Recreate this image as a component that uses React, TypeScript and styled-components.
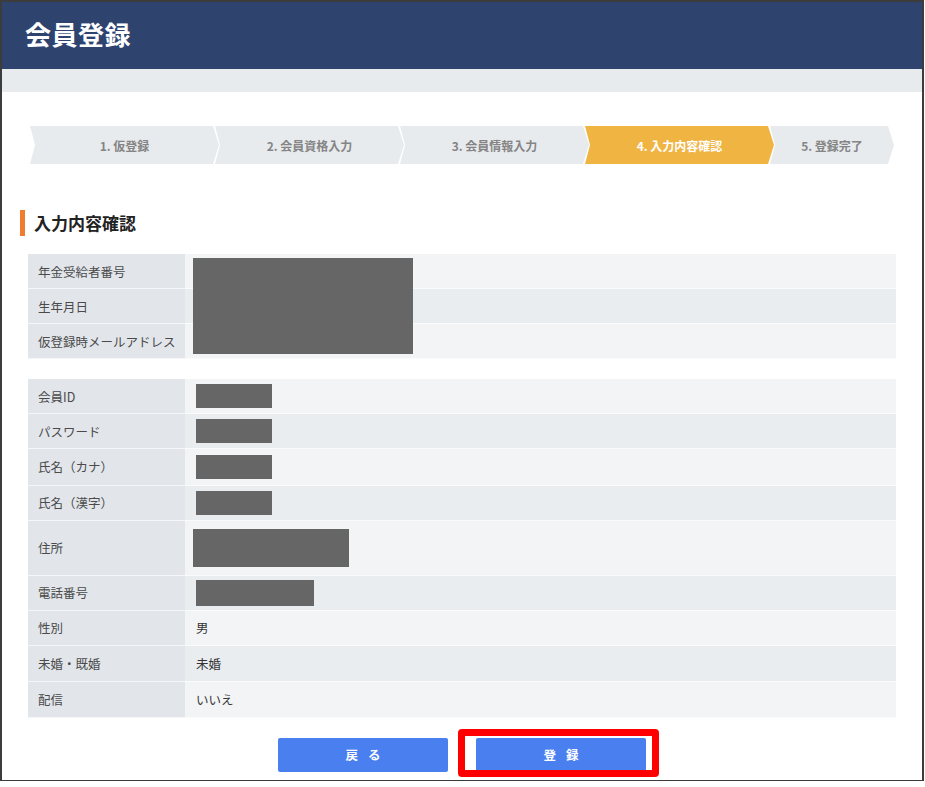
import styled, { createGlobalStyle } from "styled-components";

const GlobalStyle = createGlobalStyle`
	html, body {
		margin: 0;
		padding: 0;
		background: #ffffff;
	}
	body {
		font-family: "Noto Sans CJK JP", "Noto Sans", "Liberation Sans", sans-serif;
	}
`;

const Frame = styled.div`
	box-sizing: border-box;
	width: 924px;
	height: 781px;
	border: 2px solid #3c3c3c;
	border-bottom-width: 1.5px;
	background: #ffffff;
	display: flex;
	flex-direction: column;
`;

const Header = styled.header`
	height: 67px;
	background-color: #2e446f;
	display: flex;
	align-items: center;
	padding-left: 23px;
	h1 {
		margin: 0;
		color: #ffffff;
		font-size: 26px;
		font-weight: 700;
		letter-spacing: 0.5px;
		position: relative;
		top: -2px;
	}
`;

const SubBand = styled.div`
	height: 23px;
	background-color: #e8ebee;
`;

const Content = styled.main`
	flex: 1;
	padding: 34px 26px 0 26px;
	display: flex;
	flex-direction: column;
`;

const Stepper = styled.ol`
	list-style: none;
	margin: 0 0 0 2px;
	padding: 0;
	display: flex;
	height: 38px;
`;

const Step = styled.li<{ $active?: boolean; $narrow?: boolean }>`
	width: ${({ $narrow }) => ($narrow ? "124px" : "189px")};
	margin-left: -4px;
	&:first-child {
		margin-left: 0;
	}
	display: flex;
	align-items: center;
	justify-content: center;
	padding-top: 1px;
	box-sizing: border-box;
	background-color: ${({ $active }) => ($active ? "#f0b443" : "#e8ebee")};
	color: ${({ $active }) => ($active ? "#ffffff" : "#858585")};
	font-size: 12px;
	font-weight: 700;
	clip-path: polygon(
		0 0,
		calc(100% - 6px) 0,
		100% 50%,
		calc(100% - 6px) 100%,
		0 100%,
		5px 50%
	);
`;

const SectionTitle = styled.h2`
	margin: 46px 0 0 -8px;
	padding-left: 9px;
	border-left: 5px solid #ef7d2f;
	height: 26px;
	line-height: 26px;
	font-size: 17px;
	font-weight: 700;
	color: #222222;
`;

const Table = styled.dl<{ $top: number }>`
	margin: ${({ $top }) => $top}px 0 0 0;
	width: 868px;
	display: grid;
	grid-template-columns: 157px 1fr;
	position: relative;
`;

const Label = styled.dt<{ $h?: number }>`
	margin: 0;
	height: ${({ $h }) => $h ?? 35}px;
	background-color: #e2e6ea;
	border-bottom: 1px solid #f4f6f8;
	box-sizing: border-box;
	display: flex;
	align-items: center;
	padding-left: 10px;
	font-size: 12.5px;
	color: #4a4a4a;
`;

const Value = styled.dd<{ $alt?: boolean }>`
	margin: 0;
	background-color: ${({ $alt }) => ($alt ? "#e9edf0" : "#f3f4f6")};
	border-bottom: 1px solid #fafbfc;
	box-sizing: border-box;
	display: flex;
	align-items: center;
	padding-left: 11px;
	font-size: 12.5px;
	color: #333333;
`;

const Redact = styled.span<{ $w: number; $h: number; $dx?: number }>`
	display: block;
	width: ${({ $w }) => $w}px;
	height: ${({ $h }) => $h}px;
	margin-left: ${({ $dx }) => $dx ?? 0}px;
	background-color: #666666;
`;

/* the big block covers all three rows of the first table */
const BigRedact = styled.span`
	position: absolute;
	left: 165px;
	top: 4px;
	width: 220px;
	height: 96px;
	background-color: #666666;
`;

const ButtonRow = styled.div`
	display: flex;
	justify-content: center;
	gap: 28px;
	margin-top: 20px;
`;

const Button = styled.button`
	width: 170px;
	height: 34px;
	border: none;
	border-radius: 2px;
	background-color: #4a7ff0;
	color: #ffffff;
	font-family: inherit;
	font-size: 12.5px;
	font-weight: 700;
	letter-spacing: 10px;
	text-indent: 10px;
	position: relative;
`;

const Highlight = styled.span`
	position: absolute;
	left: -18px;
	top: -9px;
	width: 201px;
	height: 48px;
	box-sizing: border-box;
	border: 7px solid #ff0000;
	border-radius: 4px;
	pointer-events: none;
`;

const steps = [
	"1. 仮登録",
	"2. 会員資格入力",
	"3. 会員情報入力",
	"4. 入力内容確認",
	"5. 登録完了",
];

const first = ["年金受給者番号", "生年月日", "仮登録時メールアドレス"];

type Row = {
	label: string;
	h?: number;
	box?: { w: number; h: number; dx?: number };
	text?: string;
};

const second: Row[] = [
	{ label: "会員ID", box: { w: 76, h: 24 } },
	{ label: "パスワード", box: { w: 76, h: 24 } },
	{ label: "氏名（カナ）", h: 36.5, box: { w: 76, h: 24 } },
	{ label: "氏名（漢字）", box: { w: 76, h: 24 } },
	{ label: "住所", h: 55, box: { w: 156, h: 38, dx: -3 } },
	{ label: "電話番号", box: { w: 118, h: 26 } },
	{ label: "性別", text: "男" },
	{ label: "未婚・既婚", h: 36, text: "未婚" },
	{ label: "配信", h: 36, text: "いいえ" },
];

export default function App() {
	return (
		<>
			<GlobalStyle />
			<Frame>
				<Header>
					<h1>会員登録</h1>
				</Header>
				<SubBand />
				<Content>
					<Stepper>
						{steps.map((s, i) => (
							<Step key={s} $active={i === 3} $narrow={i === 4}>
								{s}
							</Step>
						))}
					</Stepper>
					<SectionTitle>入力内容確認</SectionTitle>
					<Table $top={18}>
						{first.map((l, i) => (
							<>
								<Label key={l}>{l}</Label>
								<Value key={l + "v"} $alt={i % 2 === 1} />
							</>
						))}
						<BigRedact />
					</Table>
					<Table $top={20}>
						{second.map((r, i) => (
							<>
								<Label key={r.label} $h={r.h}>
									{r.label}
								</Label>
								<Value key={r.label + "v"} $alt={i % 2 === 1}>
									{r.box && <Redact $w={r.box.w} $h={r.box.h} $dx={r.box.dx} />}
									{r.text}
								</Value>
							</>
						))}
					</Table>
					<ButtonRow>
						<Button>戻る</Button>
						<Button>
							登録
							<Highlight />
						</Button>
					</ButtonRow>
				</Content>
			</Frame>
		</>
	);
}
